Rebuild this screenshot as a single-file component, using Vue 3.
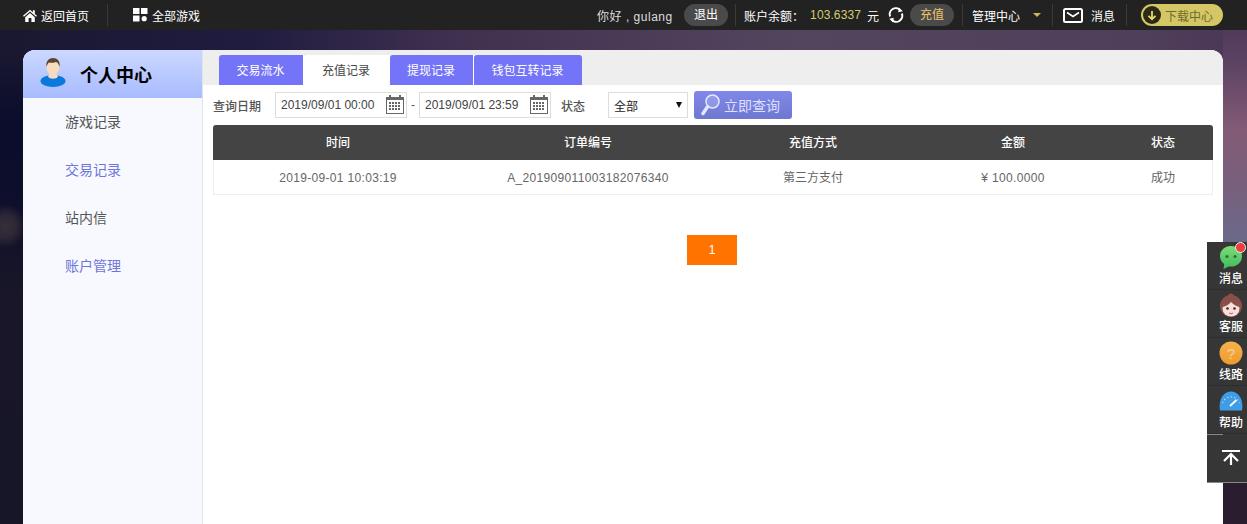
<script setup>
const menu = [
  { label: '游戏记录', on: false },
  { label: '交易记录', on: true },
  { label: '站内信', on: false },
  { label: '账户管理', on: true },
]
const tabs = [
  { label: '交易流水', w: 85 },
  { label: '充值记录', w: 86, active: true },
  { label: '提现记录', w: 84 },
  { label: '钱包互转记录', w: 108 },
]
const cols = [
  { h: '时间', c: '2019-09-01 10:03:19', w: 250, num: true },
  { h: '订单编号', c: 'A_201909011003182076340', w: 250, num: true },
  { h: '充值方式', c: '第三方支付', w: 200 },
  { h: '金额', c: '¥ 100.0000', w: 200, num: true },
  { h: '状态', c: '成功', w: 100 },
]
const calCells = [0, 1, 2, 3, 4, 5, 6, 7, 8, 9, 10, 11]
</script>

<template>
  <div class="page">
    <header class="topbar">
      <div class="top-left">
        <a class="tl home">
          <svg width="14" height="13" viewBox="0 0 14 13"><path d="M7 .8 0 6.800l.9 1L7 2.600l6.100 5.200.9-1-2.200-1.900V1.200h-1.900v2.100zM2.200 8.200V13h3.400V9h2.800v4h3.400V8.200L7 4.100z" fill="#fff"/></svg>
          返回首页
        </a>
        <i class="sep sep-a"></i>
        <a class="tl games">
          <svg width="15" height="14" viewBox="0 0 15 14"><rect width="6.500" height="6" fill="#fff"/><rect x="8" width="6.500" height="6" fill="#fff"/><rect y="7.500" width="6.500" height="6" fill="#fff"/><circle cx="11.200" cy="10.700" r="2.600" fill="#fff"/></svg>
          全部游戏
        </a>
      </div>
      <div class="top-right">
        <span class="hello">你好 , gulang</span>
        <span class="pill logout">退出</span>
        <i class="sep sep-b"></i>
        <span class="bal-label">账户余额：</span>
        <span class="bal">103.6337</span>
        <span class="yuan">元</span>
        <svg class="refresh" width="16" height="16" viewBox="0 0 16 16" fill="none"><path d="M2.200 9.500A6 6 0 0 1 12.400 3.400" stroke="#fff" stroke-width="2"/><path d="M13.800 6.500A6 6 0 0 1 3.600 12.600" stroke="#fff" stroke-width="2"/><path d="M11 .8l3.800 3.400-4.600 1zM5 15.200l-3.800-3.400 4.600-1z" fill="#fff"/></svg>
        <span class="pill recharge">充值</span>
        <i class="sep sep-c"></i>
        <span class="manage">管理中心</span>
        <i class="caret"></i>
        <i class="sep sep-d"></i>
        <svg class="mail" width="20" height="15" viewBox="0 0 20 15" fill="none"><rect x="1" y="1" width="18" height="13" rx="1.500" stroke="#fff" stroke-width="2"/><path d="M4 4.500l6 4 6-4" stroke="#fff" stroke-width="1.600"/></svg>
        <span class="msg">消息</span>
        <i class="sep sep-e"></i>
        <span class="download">
          <span class="dl-ico">
            <svg width="10" height="11" viewBox="0 0 10 11" fill="none"><path d="M5 1v8M1.500 5.800 5 9.200l3.500-3.400" stroke="#e8d86f" stroke-width="1.800"/></svg>
          </span>
          下载中心
        </span>
      </div>
    </header>

    <main class="panel">
      <aside class="side">
        <div class="side-head">
          <svg class="avatar" width="26" height="29" viewBox="0 0 26 29">
            <ellipse cx="13" cy="23" rx="12.500" ry="6" fill="#0b78dc"/>
            <path d="M8 18.500c1.500 3 8.500 3 10 0l-1.500-3h-7z" fill="#f7dcc0"/>
            <ellipse cx="13" cy="9" rx="6.500" ry="8" fill="#f9dcbd"/>
            <path d="M6.500 9C5.500 3 9 0 13 0s7.500 3 6.500 9c-.7-3-2-4.500-3.500-5-2 1-6 1-7 .5C7.800 5.500 7 7 6.500 9z" fill="#5b4636"/>
          </svg>
          <span class="side-title">个人中心</span>
        </div>
        <nav class="side-nav">
          <a v-for="m in menu" :key="m.label" class="side-item" :class="{ on: m.on }">{{ m.label }}</a>
        </nav>
      </aside>

      <section class="content">
        <div class="tabs">
          <a
            v-for="t in tabs"
            :key="t.label"
            class="tab"
            :class="{ active: t.active }"
            :style="{ width: t.w + 'px' }"
          >{{ t.label }}</a>
        </div>

        <div class="filter">
          <span class="f-label">查询日期</span>
          <div class="date">
            <span>2019/09/01 00:00</span>
            <span class="cal"><i v-for="c in calCells" :key="c"></i></span>
          </div>
          <span class="dash">-</span>
          <div class="date">
            <span>2019/09/01 23:59</span>
            <span class="cal"><i v-for="c in calCells" :key="c"></i></span>
          </div>
          <span class="f-label status-label">状态</span>
          <div class="select"><span>全部</span><i class="sel-caret"></i></div>
          <button class="query">
            <svg width="19" height="24" viewBox="0 0 19 24" fill="none">
              <circle cx="11.500" cy="8.500" r="6.500" fill="#ffffff" fill-opacity=".18" stroke="#e4e6ff" stroke-width="1.500"/>
              <path d="M6.500 13.800 2 20.500" stroke="#e4e6ff" stroke-width="3.400" stroke-linecap="round"/>
            </svg>
            立即查询
          </button>
        </div>

        <div class="table">
          <div class="t-row t-head">
            <div v-for="c in cols" :key="c.h" class="cell" :style="{ width: c.w + 'px' }">{{ c.h }}</div>
          </div>
          <div class="t-row t-body">
            <div v-for="c in cols" :key="c.h" class="cell" :class="{ num: c.num }" :style="{ width: c.w + 'px' }">{{ c.c }}</div>
          </div>
        </div>

        <div class="pager"><span class="page-no">1</span></div>
      </section>
    </main>

    <aside class="float">
      <div class="f-item">
        <span class="f-ico">
          <svg width="24" height="25" viewBox="0 0 24 25">
            <defs>
              <linearGradient id="gr" x1="0" y1="0" x2="0" y2="1"><stop offset="0" stop-color="#7edb78"/><stop offset="1" stop-color="#3fbb5c"/></linearGradient>
            </defs>
            <path d="M12 1C5.500 1 1 5.500 1 11c0 3.400 1.700 6.200 4.200 8L4.500 24l5.300-2.600c.7.100 1.500.200 2.200.200 6.500 0 11-4.700 11-10.600S18.500 1 12 1z" fill="url(#gr)"/>
            <circle cx="8" cy="11.500" r="1.600" fill="#2f6e3a"/><circle cx="16" cy="11.500" r="1.600" fill="#2f6e3a"/>
          </svg>
          <i class="dot"></i>
        </span>
        <span class="f-text">消息</span>
      </div>
      <div class="f-item">
        <span class="f-ico">
          <svg width="24" height="25" viewBox="0 0 24 25">
            <circle cx="12" cy="3.500" r="3" fill="#8a4f4a"/>
            <circle cx="12" cy="13" r="11" fill="#8a4f4a"/>
            <ellipse cx="12" cy="15.500" rx="8.500" ry="8" fill="#f8dfdc"/>
            <path d="M3.500 14C5 8 9 6 12 6s7 2 8.500 8c-3-.5-6-2.500-8.500-5-2 2.500-5 4.500-8.500 5z" fill="#8a4f4a"/>
            <circle cx="8.500" cy="15.500" r="1.300" fill="#3a2a2a"/><circle cx="15.500" cy="15.500" r="1.300" fill="#3a2a2a"/>
            <path d="M10 20q2 1.500 4 0" stroke="#d05a5a" stroke-width="1" fill="none"/>
          </svg>
        </span>
        <span class="f-text">客服</span>
      </div>
      <div class="f-item">
        <span class="f-ico">
          <svg width="24" height="24" viewBox="0 0 24 24">
            <defs>
              <linearGradient id="og" x1="0" y1="0" x2="0" y2="1"><stop offset="0" stop-color="#f5b24e"/><stop offset="1" stop-color="#ee9a2e"/></linearGradient>
            </defs>
            <circle cx="12" cy="12" r="11.500" fill="url(#og)"/>
            <text x="12" y="17.500" text-anchor="middle" font-size="15" font-family="Liberation Sans" fill="#f9d48c">?</text>
          </svg>
        </span>
        <span class="f-text">线路</span>
      </div>
      <div class="f-item">
        <span class="f-ico">
          <svg width="24" height="24" viewBox="0 0 24 24" fill="none">
            <path d="M1 21.500C-1 10 5 2.500 12 2.500S25 10 23 21.500z" fill="#3f9de8"/>
            <path d="M11 17l6.500-6" stroke="#fff" stroke-width="1.800"/>
            <path d="M3.500 14a9 9 0 0 1 17 0" stroke="#a9d6f8" stroke-width="1.200" stroke-dasharray="1.500 2"/>
          </svg>
        </span>
        <span class="f-text">帮助</span>
      </div>
      <div class="f-top">
        <i class="f-rule"></i>
        <svg width="18" height="16" viewBox="0 0 18 16" fill="none">
          <path d="M0 1h18" stroke="#fff" stroke-width="2"/>
          <path d="M9 15V4M2 11l7-7 7 7" stroke="#fff" stroke-width="2.200"/>
        </svg>
      </div>
    </aside>
  </div>
</template>

<style>
html, body { margin: 0; padding: 0; overflow: hidden; }
</style>

<style scoped>
.page {
  position: relative;
  width: 1247px;
  height: 524px;
  overflow: hidden;
  font-family: "Microsoft YaHei", "Liberation Sans", "Noto Sans CJK SC", sans-serif;
  font-size: 12px;
  background:
    radial-gradient(ellipse 22px 22px at 5px 226px, rgba(110, 90, 80, .4) 0%, rgba(110, 90, 80, .3) 50%, rgba(110, 90, 80, 0) 100%) no-repeat,
    linear-gradient(180deg, #1a1830 0px, #1a1830 50px, #0b0d2c 120px, #0d0e2c 190px, #181628 290px, #171528 524px) left top / 23px 100% no-repeat,
    linear-gradient(180deg, #473355 0px, #5a4262 60px, #835b76 130px, #77607e 190px, #6a6a88 240px, #6a6a88 482px, #2a1d30 483px, #2a1d30 524px) right top / 24px 100% no-repeat,
    linear-gradient(90deg, #1a1830 0px, #1f1c40 250px, #40304f 450px, #54455f 800px, #4f3f5a 1150px, #4a3557 1247px);
  display: flex;
  flex-direction: column;
}
.topbar {
  height: 30px;
  flex: none;
  background: #222;
  color: #fff;
  display: flex;
  justify-content: space-between;
  align-items: center;
  box-sizing: border-box;
  padding: 0 24px 0 23px;
}
.top-left, .top-right { display: flex; align-items: center; height: 30px; }
.tl { display: flex; align-items: center; }
.home svg { margin-right: 4px; }
.games svg { margin-right: 4px; }
.sep { width: 1px; height: 22px; background: #3a3a3a; display: block; }
.sep-a { margin: 0 25px 0 18px; }
.sep-b { margin: 0 8px 0 7px; }
.sep-c { margin: 0 9px 0 8px; }
.sep-d { margin: 0 10px 0 11px; }
.sep-e { margin: 0 14px 0 11px; }
.hello { color: #ddd; font-size: 12px; width: 87px; letter-spacing: .5px; white-space: nowrap; }
.pill {
  height: 22px;
  line-height: 22px;
  border-radius: 11px;
  width: 44px;
  text-align: center;
  background: #4a4a4a;
}
.bal-label { width: 66px; }
.bal { color: #d7cc6e; margin-right: 6px; letter-spacing: .1px; }
.yuan { margin-right: 9px; }
.refresh { margin-right: 6px; }
.recharge { color: #efc66c; }
.manage { width: 60px; }
.caret {
  width: 0;
  height: 0;
  border-left: 4px solid transparent;
  border-right: 4px solid transparent;
  border-top: 4px solid #c9b761;
  display: block;
  margin-left: 1px;
}
.mail { margin-right: 8px; }
.msg { font-size: 12px; }
.download {
  width: 82px;
  height: 22px;
  box-sizing: border-box;
  border-radius: 11px;
  background: #d5c766;
  color: #6f6a30;
  display: flex;
  align-items: center;
  padding-left: 2px;
  gap: 4px;
}
.dl-ico {
  width: 18px;
  height: 18px;
  border-radius: 50%;
  background: #2b2a16;
  display: flex;
  align-items: center;
  justify-content: center;
}

.panel {
  margin: 20px 24px 0 23px;
  flex: 1;
  background: #fff;
  border-radius: 12px 12px 0 0;
  overflow: hidden;
  display: flex;
}
.side {
  width: 180px;
  flex: none;
  box-sizing: border-box;
  background: #f7f9ff;
  border-right: 1px solid #dfe3ee;
}
.side-head {
  height: 48px;
  background: linear-gradient(180deg, #cbd8ff 0%, #a8bbff 100%);
  display: flex;
  align-items: center;
  padding-left: 17px;
}
.avatar { margin-right: 14px; margin-top: -4px; }
.side-title { font-size: 18px; font-weight: 700; color: #000; }
.side-nav { display: flex; flex-direction: column; }
.side-item {
  height: 48px;
  line-height: 49px;
  padding-left: 42px;
  font-size: 14px;
  color: #555;
}
.side-item.on { color: #6f76d8; }

.content { flex: 1; min-width: 0; }
.tabs {
  height: 35px;
  box-sizing: border-box;
  background: #eee;
  padding: 5px 0 0 16px;
  display: flex;
}
.tab {
  height: 30px;
  line-height: 33px;
  text-align: center;
  background: #7374f7;
  color: #fff;
  border-right: 1px solid #fff;
  box-sizing: border-box;
  border-radius: 3px 0 0 0;
  padding-right: 1px;
}
.tab:last-child { border-right: none; border-radius: 3px 3px 0 0; }
.tab.active { background: #fff; color: #444; }

.filter {
  height: 26px;
  margin-top: 7px;
  padding-left: 10px;
  display: flex;
  align-items: center;
  color: #444;
}
.f-label { font-weight: 500; color: #555; }
.date {
  width: 132px;
  height: 26px;
  margin-left: 14px;
  box-sizing: border-box;
  border: 1px solid #ddd;
  padding-left: 5px;
  display: flex;
  align-items: center;
  justify-content: space-between;
  padding-right: 2px;
  color: #444;
}
.date + .dash + .date { margin-left: 4px; }
.dash { margin-left: 4px; color: #555; }
.cal {
  position: relative;
  width: 18px;
  height: 17px;
  box-sizing: border-box;
  border: 1px solid #666;
  border-top-width: 3px;
  display: grid;
  grid-template-columns: repeat(4, 2px);
  grid-auto-rows: 2px;
  gap: 1px;
  padding: 2px 1px 0 2px;
}
.cal::before,
.cal::after {
  content: "";
  position: absolute;
  top: -5px;
  width: 2px;
  height: 4px;
  background: #666;
}
.cal::before { left: 2px; }
.cal::after { right: 2px; }
.cal i { background: #666; display: block; }
.status-label { margin-left: 10px; }
.select {
  width: 80px;
  height: 26px;
  box-sizing: border-box;
  margin-left: 23px;
  border: 1px solid #ddd;
  padding: 0 5px;
  display: flex;
  align-items: center;
  justify-content: space-between;
  color: #222;
}
.sel-caret {
  width: 0;
  height: 0;
  border-left: 3.5px solid transparent;
  border-right: 3.5px solid transparent;
  border-top: 6px solid #111;
  display: block;
}
.query {
  width: 98px;
  height: 28px;
  margin-left: 6px;
  box-sizing: border-box;
  border: none;
  border-radius: 3px;
  background: linear-gradient(180deg, #8088ea 0%, #6f78cf 100%);
  color: #dcdfff;
  font-family: inherit;
  font-size: 14px;
  display: flex;
  align-items: center;
  justify-content: flex-start;
  padding: 0 0 0 7px;
  gap: 4px;
}

.table { margin: 7px 10px 0 10px; }
.t-row { display: flex; }
.t-head {
  height: 35px;
  background: #444;
  color: #fff;
  font-weight: 500;
  border-radius: 3px 3px 0 0;
}
.t-body {
  height: 35px;
  color: #666;
  box-sizing: border-box;
  border: 1px solid #eee;
  border-top: none;
  margin: 0;
}
.t-body .num { letter-spacing: .33px; }
.cell {
  text-align: center;
  line-height: 37px;
  flex: none;
}
.t-body .cell:first-child { margin-left: -1px; }

.pager {
  display: flex;
  justify-content: center;
  margin-top: 40px;
  padding-right: 2px;
}
.page-no {
  width: 50px;
  height: 30px;
  line-height: 30px;
  text-align: center;
  background: #ff7300;
  color: #fff;
}

.float {
  position: absolute;
  right: 0;
  top: 242px;
  width: 40px;
  background: #363636;
  color: #fff;
  display: flex;
  flex-direction: column;
  border-bottom: 1px solid #888;
  box-sizing: border-box;
  height: 241px;
}
.f-item {
  height: 48px;
  box-sizing: border-box;
  display: flex;
  flex-direction: column;
  align-items: center;
  padding: 3px 0 0 8px;
  border-bottom: 1px solid #2d2d2d;
}
.f-ico { position: relative; height: 26px; display: block; }
.f-text { line-height: 15px; font-size: 12px; margin-top: 1px; font-weight: 500; }
.dot {
  position: absolute;
  right: -3px;
  top: -3px;
  width: 11px;
  height: 11px;
  border-radius: 50%;
  background: #e8403f;
  border: 1px solid #eee;
  box-sizing: border-box;
}
.f-top {
  flex: 1;
  box-sizing: border-box;
  display: flex;
  align-items: center;
  justify-content: center;
  padding-left: 8px;
  position: relative;
}
.f-rule {
  position: absolute;
  left: 0;
  top: 0;
  width: 16px;
  height: 1px;
  background: #888;
}
</style>
